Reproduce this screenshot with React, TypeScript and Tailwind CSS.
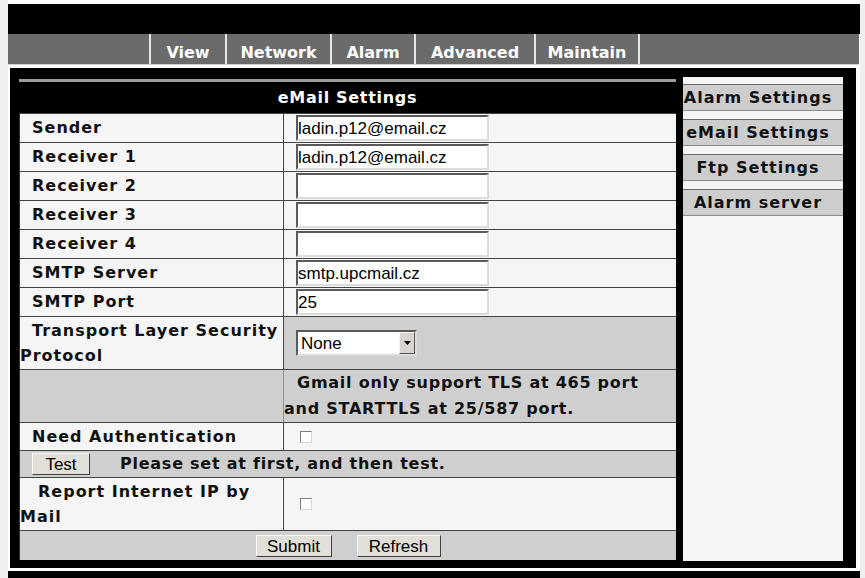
import React from "react";

const LBLBASE = "font-['DejaVu_Sans',sans-serif] font-bold text-[16px] text-[#111]";
const LBL = `${LBLBASE} tracking-[1px]`;
const LBLN = `${LBLBASE} tracking-[0.75px]`;
const VAL = "font-['Liberation_Sans',Arial,sans-serif] text-[17px] text-black";

function TextBox({ value }: { value?: string }) {
  return (
    <div className={`w-[193px] h-[26px] bg-white border-2 border-t-[#5a5a5a] border-l-[#5a5a5a] border-b-[#dcdcdc] border-r-[#dcdcdc] flex items-center leading-none ${VAL}`}>
      {value}
    </div>
  );
}

function Check() {
  return <div className="w-[12px] h-[12px] bg-white border border-t-[#808080] border-l-[#808080] border-b-[#d4d4d4] border-r-[#d4d4d4]" />;
}

function Btn({ label, w }: { label: string; w: string }) {
  return (
    <div className={`${w} h-[22px] bg-[#e2dfd9] border border-t-[#f8f8f8] border-l-[#f8f8f8] border-b-[#404040] border-r-[#404040] flex items-end justify-center leading-[19px] ${VAL}`}>
      {label}
    </div>
  );
}

function InputRow({ label, value }: { label: string; value?: string }) {
  return (
    <div className="flex h-[29px] border-t border-[#444] bg-[#f5f5f5]">
      <div className={`w-[263px] pl-[12px] flex items-center ${LBL}`}>{label}</div>
      <div className="flex-1 border-l border-[#444] flex items-center pl-[12px]">
        <TextBox value={value} />
      </div>
    </div>
  );
}

export default function App() {
  const nav = [
    { t: "View", w: "w-[76px]" },
    { t: "Network", w: "w-[105px]" },
    { t: "Alarm", w: "w-[84px]" },
    { t: "Advanced", w: "w-[120px]" },
    { t: "Maintain", w: "w-[104px]" },
  ];
  const side = ["Alarm Settings", "eMail Settings", "Ftp Settings", "Alarm server"];
  return (
    <div className="w-[865px] h-[578px] overflow-hidden bg-[#efefef] pl-[8px]">
      <div className="w-[852px] h-full bg-white pt-[4px] flex flex-col">
        {/* top black header */}
        <div className="h-[30px] bg-black" />
        {/* nav */}
        <div className="h-[31px] bg-[#6b6b6b] border-b border-[#d0d0d0] flex w-[851px]">
          <div className="w-[141px]" />
          {nav.map((n) => (
            <div
              key={n.t}
              className={`${n.w} border-l-2 border-[#e6e6e6] flex items-center justify-center pt-[7px] font-['DejaVu_Sans',sans-serif] font-bold text-[16px] text-white`}
            >
              {n.t}
            </div>
          ))}
          <div className="flex-1 border-l-2 border-[#e6e6e6]" />
        </div>
        <div className="h-[3px]" />
        {/* main black panel */}
        <div className="ml-[2px] w-[846px] h-[500px] bg-black flex pl-[9px] pr-[13px]">
          {/* left column */}
          <div className="w-[657px] pt-[11px] flex flex-col">
            <div className="h-[3px] bg-[#9c9c9c]" />
            <div className="h-[31px] flex items-center justify-center font-['DejaVu_Sans',sans-serif] font-bold text-[16px] tracking-[0.7px] text-white">
              eMail Settings
            </div>
            <div className="flex flex-col border-l border-[#333]">
              <InputRow label="Sender" value="ladin.p12@email.cz" />
              <InputRow label="Receiver 1" value="ladin.p12@email.cz" />
              <InputRow label="Receiver 2" />
              <InputRow label="Receiver 3" />
              <InputRow label="Receiver 4" />
              <InputRow label="SMTP Server" value="smtp.upcmail.cz" />
              <InputRow label="SMTP Port" value="25" />
              {/* TLS */}
              <div className="flex h-[53px] border-t border-[#444]">
                <div className={`w-[263px] bg-[#f5f5f5] flex items-center ${LBL} leading-[25px]`}>
                  <div className="indent-[12px]">
                    Transport Layer Security
                    <br />
                    Protocol
                  </div>
                </div>
                <div className="flex-1 border-l border-[#444] bg-[#cfcfcf] flex items-center pl-[12px]">
                  <div className="w-[121px] h-[26px] bg-white border-2 border-t-[#5a5a5a] border-l-[#5a5a5a] border-b-[#dcdcdc] border-r-[#dcdcdc] flex items-center justify-between">
                    <span className={`pl-[3px] leading-none ${VAL}`}>None</span>
                    <div className="w-[16px] h-[22px] bg-[#d8d5d0] border border-t-[#f4f4f4] border-l-[#f4f4f4] border-b-[#555] border-r-[#555] flex items-center justify-center">
                      <svg width="7" height="4" viewBox="0 0 7 4">
                        <path d="M0 0H7L3.5 4Z" fill="#000" />
                      </svg>
                    </div>
                  </div>
                </div>
              </div>
              {/* Gmail note */}
              <div className="flex h-[53px] border-t border-[#444] bg-[#cfcfcf]">
                <div className="w-[263px]" />
                <div className={`flex-1 border-l border-[#8a93a8] flex items-center ${LBLN} leading-[26px]`}>
                  <div className="indent-[13px] whitespace-nowrap">
                    Gmail only support TLS at 465 port
                    <br />
                    and STARTTLS at 25/587 port.
                  </div>
                </div>
              </div>
              {/* Need Auth */}
              <div className="flex h-[28px] border-t border-[#444] bg-[#f5f5f5]">
                <div className={`w-[263px] pl-[12px] flex items-center ${LBL}`}>Need Authentication</div>
                <div className="flex-1 border-l border-[#444] flex items-center pl-[16px]">
                  <Check />
                </div>
              </div>
              {/* Test */}
              <div className="flex items-center h-[27px] border-t border-[#444] bg-[#cfcfcf] pl-[12px]">
                <Btn label="Test" w="w-[58px]" />
                <span className={`ml-[30px] ${LBLN}`}>Please set at first, and then test.</span>
              </div>
              {/* Report */}
              <div className="flex h-[53px] border-t border-[#444] bg-[#f5f5f5]">
                <div className={`w-[263px] flex items-center ${LBL} leading-[25px]`}>
                  <div className="indent-[18px]">
                    Report Internet IP by
                    <br />
                    Mail
                  </div>
                </div>
                <div className="flex-1 border-l border-[#444] flex items-center pl-[16px]">
                  <Check />
                </div>
              </div>
              {/* Submit */}
              <div className="flex h-[30px] border-t border-[#444] bg-[#cfcfcf] items-center justify-center gap-[25px]">
                <Btn label="Submit" w="w-[76px]" />
                <Btn label="Refresh" w="w-[84px]" />
              </div>
            </div>
          </div>
          {/* sidebar */}
          <div className="ml-[7px] mt-[9px] w-[160px] h-[484px] bg-[#f5f5f5] pt-[7px] flex flex-col gap-[8px]">
            {side.map((s) => (
              <div
                key={s}
                className={`h-[27px] bg-[#cdcdcd] border-t border-b border-t-[#6a6a6a] border-b-[#8a8a8a] flex items-center justify-center pr-[10px] whitespace-nowrap ${LBL}`}
              >
                {s}
              </div>
            ))}
          </div>
        </div>
        <div className="h-[3px]" />
        <div className="flex-1 bg-black" />
      </div>
    </div>
  );
}
